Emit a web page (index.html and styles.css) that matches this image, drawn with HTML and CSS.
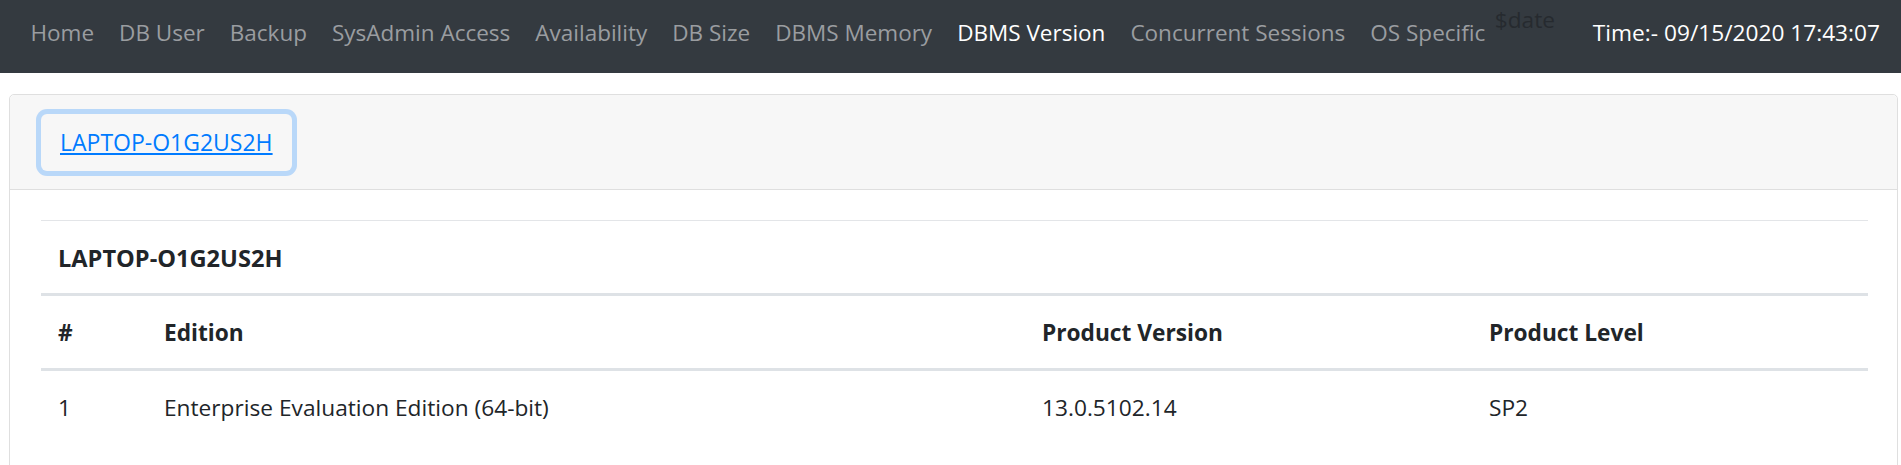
FILE: index.html
```html
<!DOCTYPE html>
<html lang="en">
<head>
<meta charset="utf-8">
<title>DBMS Version</title>
<link rel="stylesheet" href="styles.css">
</head>
<body>
<nav class="navbar">
  <ul class="nav-links">
    <li><a class="nav-link" href="#">Home</a></li>
    <li><a class="nav-link" href="#">DB User</a></li>
    <li><a class="nav-link" href="#">Backup</a></li>
    <li><a class="nav-link" href="#">SysAdmin Access</a></li>
    <li><a class="nav-link" href="#">Availability</a></li>
    <li><a class="nav-link" href="#">DB Size</a></li>
    <li><a class="nav-link" href="#">DBMS Memory</a></li>
    <li><a class="nav-link active" href="#">DBMS Version</a></li>
    <li><a class="nav-link" href="#">Concurrent Sessions</a></li>
    <li><a class="nav-link" href="#">OS Specific</a></li>
  </ul>
  <span class="date-var">$date</span>
  <span class="clock">Time:- 09/15/2020 17:43:07</span>
</nav>

<div class="card">
  <div class="card-header">
    <a class="host-btn" href="#">LAPTOP-O1G2US2H</a>
  </div>
  <div class="card-body">
    <table class="data-table">
      <colgroup>
        <col class="col-num">
        <col class="col-edition">
        <col class="col-version">
        <col class="col-level">
      </colgroup>
      <thead>
        <tr class="host-row"><th colspan="4">LAPTOP-O1G2US2H</th></tr>
        <tr class="head-row"><th>#</th><th>Edition</th><th>Product Version</th><th>Product Level</th></tr>
      </thead>
      <tbody>
        <tr><td>1</td><td>Enterprise Evaluation Edition (64-bit)</td><td>13.0.5102.14</td><td>SP2</td></tr>
      </tbody>
    </table>
  </div>
</div>
</body>
</html>
```

FILE: styles.css
```css
html, body {
  margin: 0;
  padding: 0;
  overflow: hidden;
}

body {
  font-family: "Open Sans", "Noto Sans", sans-serif;
  font-size: 22.7px;
  line-height: 32px;
  color: #212529;
  background: #ffffff;
}

.navbar {
  display: flex;
  align-items: center;
  height: 73px;
  box-sizing: border-box;
  padding: 0 21px 8px 18px;
  background: #343a40;
}

.nav-links {
  display: flex;
  list-style: none;
  margin: 0;
  padding: 0;
  font-size: 22.5px;
}

.nav-link {
  display: block;
  padding: 0 12.5px;
  color: #9a9da0;
  text-decoration: none;
  white-space: nowrap;
}

.nav-link.active {
  color: #ffffff;
}

.date-var {
  align-self: flex-start;
  margin-top: 4px;
  margin-left: -3px;
  color: #262a2f;
}

.clock {
  margin-left: auto;
  color: #ffffff;
  white-space: nowrap;
}

.card {
  margin: 21px 3px 0 9px;
  border: 1px solid #dfdfdf;
  border-radius: 5px;
  background: #ffffff;
}

.card-header {
  display: flex;
  align-items: flex-start;
  padding: 19px 31px 18px 31px;
  background: #f7f7f7;
  border-bottom: 1px solid #dfdfdf;
  border-radius: 5px 5px 0 0;
}

.host-btn {
  display: inline-block;
  padding: 8px 18px;
  border: 1px solid transparent;
  border-radius: 6px;
  font-size: 23px;
  line-height: 39px;
  color: #007bff;
  text-decoration: underline;
  text-underline-offset: 2px;
  box-shadow: 0 0 0 5px rgba(0, 123, 255, 0.25);
}

.card-body {
  padding: 30px 29px 30px 31px;
}

.data-table {
  width: 100%;
  table-layout: fixed;
  border-collapse: separate;
  border-spacing: 0;
}

.col-num { width: 106px; }
.col-edition { width: 878px; }
.col-version { width: 447px; }
.col-level { width: auto; }

.data-table th,
.data-table td {
  padding: 21px 17px 19px 17px;
  text-align: left;
  vertical-align: top;
  white-space: nowrap;
}

.data-table th {
  font-weight: 700;
}

.host-row th {
  font-size: 23.6px;
  border-top: 1px solid #e3e5e8;
  border-bottom: 3px solid #dee2e6;
}

.head-row th {
  border-bottom: 3px solid #dee2e6;
}
```
